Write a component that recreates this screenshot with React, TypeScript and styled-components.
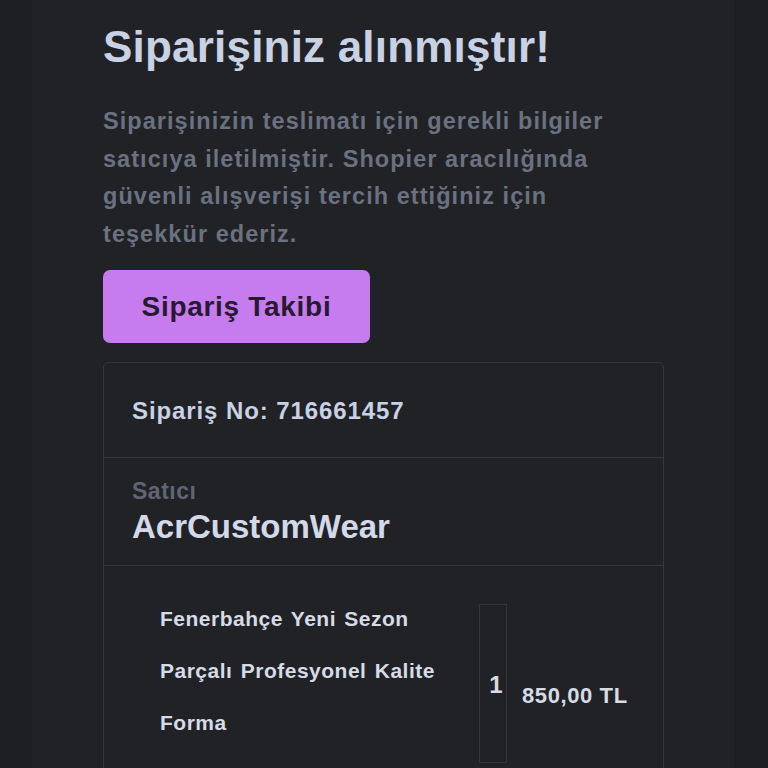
import styled, { createGlobalStyle } from "styled-components";

const GlobalStyle = createGlobalStyle`
  html, body {
    margin: 0;
    padding: 0;
    background: #1d1e21;
  }
  * {
    box-sizing: border-box;
  }
`;

const Page = styled.div`
  width: 703px;
  min-height: 768px;
  margin-left: 32px;
  background: #212225;
  padding: 22px 71px 0;
  font-family: "Liberation Sans", Arial, sans-serif;
`;

const Content = styled.div`
  max-width: 561px;
  display: flex;
  flex-direction: column;
`;

const Title = styled.h1`
  margin: 0;
  font-size: 44px;
  font-weight: 700;
  line-height: 50px;
  letter-spacing: 0.2px;
  color: #c9d1e4;
`;

const Lead = styled.p`
  margin: 31px 0 0;
  font-size: 23.5px;
  font-weight: 700;
  line-height: 37.5px;
  letter-spacing: 1.05px;
  color: #6a7180;
  max-width: 540px;
`;

const TrackButton = styled.a`
  margin-top: 17px;
  align-self: flex-start;
  width: 267px;
  height: 73px;
  display: flex;
  align-items: center;
  justify-content: center;
  border-radius: 7px;
  background: #c67bef;
  color: #261a2e;
  font-size: 28px;
  font-weight: 700;
  letter-spacing: 0.7px;
  text-decoration: none;
  cursor: pointer;
`;

const Card = styled.div`
  margin-top: 19px;
  border: 1px solid #36373b;
  border-radius: 6px;
  display: flex;
  flex-direction: column;
`;

const Section = styled.div<{ $pad: string }>`
  padding: ${(p) => p.$pad};
  border-top: 1px solid #36373b;
  &:first-child {
    border-top: none;
  }
`;

const OrderNo = styled.div`
  font-size: 24px;
  font-weight: 700;
  line-height: 26px;
  letter-spacing: 0.9px;
  color: #c9d1e4;
`;

const Label = styled.div`
  font-size: 23px;
  font-weight: 700;
  line-height: 26px;
  letter-spacing: 0.5px;
  color: #5f6574;
`;

const Seller = styled.div`
  margin-top: 4px;
  font-size: 33px;
  font-weight: 700;
  line-height: 38px;
  color: #d3d9e8;
`;

const ItemRow = styled.div`
  display: grid;
  grid-template-columns: 347px 28px auto;
  align-items: start;
  padding-left: 28px;
`;

const ItemName = styled.div`
  padding: 0 28px;
  font-size: 21px;
  font-weight: 700;
  line-height: 52px;
  letter-spacing: 0.5px;
  word-spacing: 2px;
  color: #d6dbe6;
`;

const Qty = styled.div`
  margin-top: 11px;
  height: 159px;
  border: 1px solid #36373b;
  display: flex;
  align-items: center;
  justify-content: center;
  padding-left: 6px;
  padding-top: 3px;
  font-size: 24px;
  font-weight: 700;
  color: #d6dbe6;
`;

const Price = styled.div`
  align-self: center;
  padding-left: 15px;
  padding-top: 36px;
  font-size: 22px;
  font-weight: 700;
  letter-spacing: 0.6px;
  color: #d6dbe6;
  white-space: nowrap;
`;

export default function App() {
  return (
    <>
      <GlobalStyle />
      <Page>
        <Content>
          <Title>Siparişiniz alınmıştır!</Title>
          <Lead>
            Siparişinizin teslimatı için gerekli bilgiler satıcıya
            iletilmiştir. Shopier aracılığında güvenli alışverişi tercih
            ettiğiniz için teşekkür ederiz.
          </Lead>
          <TrackButton>Sipariş Takibi</TrackButton>
          <Card>
            <Section $pad="35px 28px 33px">
              <OrderNo>Sipariş No: 716661457</OrderNo>
            </Section>
            <Section $pad="20px 28px 19px">
              <Label>Satıcı</Label>
              <Seller>AcrCustomWear</Seller>
            </Section>
            <Section $pad="27px 0 28px">
              <ItemRow>
                <ItemName>
                  Fenerbahçe Yeni Sezon Parçalı Profesyonel Kalite Forma
                </ItemName>
                <Qty>1</Qty>
                <Price>850,00 TL</Price>
              </ItemRow>
            </Section>
          </Card>
        </Content>
      </Page>
    </>
  );
}
